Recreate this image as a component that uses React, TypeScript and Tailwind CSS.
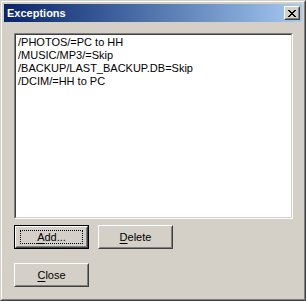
const entries = [
  '/PHOTOS/=PC to HH',
  '/MUSIC/MP3/=Skip',
  '/BACKUP/LAST_BACKUP.DB=Skip',
  '/DCIM/=HH to PC',
];

const font = "font-['Liberation_Sans',Arial,sans-serif]";

const Raised = ({ children, className = '' }: { children: React.ReactNode; className?: string }) => (
  <div className={`border border-t-white border-l-white border-r-[#404040] border-b-[#404040] bg-[#d4d0c8] ${className}`}>
    <div className="w-full h-full border border-t-[#d4d0c8] border-l-[#d4d0c8] border-r-[#808080] border-b-[#808080] flex items-center justify-center">
      {children}
    </div>
  </div>
);

const DialogButton = ({
  label,
  accel,
  isDefault = false,
}: {
  label: string;
  accel: number;
  isDefault?: boolean;
}) => {
  const text = (
    <span className="text-[11px] leading-none text-black">
      {label.slice(0, accel)}
      <span className="underline underline-offset-[2px]">{label[accel]}</span>
      {label.slice(accel + 1)}
    </span>
  );
  if (isDefault) {
    return (
      <div className="w-[75px] h-[24px] border border-black">
        <Raised className="w-full h-full">
          <div className="w-[63px] h-[14px] border border-dotted border-black flex items-center justify-center">
            {text}
          </div>
        </Raised>
      </div>
    );
  }
  return <Raised className="w-[75px] h-[24px]">{text}</Raised>;
};

const CloseGlyph = () => (
  <svg width="8" height="7" viewBox="0 0 8 7" shapeRendering="crispEdges">
    <path
      fill="#000"
      d="M0 0h2v1h-2zM6 0h2v1h-2zM1 1h2v1h-2zM5 1h2v1h-2zM2 2h4v1h-4zM3 3h2v1h-2zM2 4h4v1h-4zM1 5h2v1h-2zM5 5h2v1h-2zM0 6h2v1h-2zM6 6h2v1h-2z"
    />
  </svg>
);

export default function App() {
  return (
    <div className={`${font} w-[306px] h-[301px] bg-[#d4d0c8] border border-t-[#d4d0c8] border-l-[#d4d0c8] border-r-[#404040] border-b-[#404040]`}>
      <div className="w-full h-full border border-t-white border-l-white border-r-[#808080] border-b-[#808080] p-[2px] flex flex-col">
        <div className="h-[18px] bg-gradient-to-r from-[#0a246a] to-[#a6caf0] flex items-center justify-between pl-[3px] pr-[2px]">
          <span className="text-white font-bold text-[11px] leading-none">Exceptions</span>
          <Raised className="w-[16px] h-[14px]">
            <CloseGlyph />
          </Raised>
        </div>

        <div className="ml-[10px] mt-[11px] w-[279px] h-[186px] border border-t-[#808080] border-l-[#808080] border-r-white border-b-white">
          <div className="w-full h-full border border-t-[#404040] border-l-[#404040] border-r-[#d4d0c8] border-b-[#d4d0c8] bg-white pl-[2px] pt-[1px]">
            {entries.map((e) => (
              <div key={e} className="text-[11px] leading-[13px] text-black">
                {e}
              </div>
            ))}
          </div>
        </div>

        <div className="ml-[10px] mt-[6px] flex gap-[9px]">
          <DialogButton label="Add..." accel={0} isDefault />
          <DialogButton label="Delete" accel={0} />
        </div>

        <div className="ml-[10px] mt-[14px]">
          <DialogButton label="Close" accel={0} />
        </div>
      </div>
    </div>
  );
}
